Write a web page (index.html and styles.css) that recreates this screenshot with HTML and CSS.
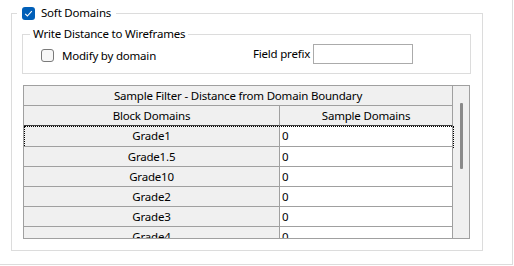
FILE: index.html
```html
<!DOCTYPE html>
<html>
<head>
<meta charset="utf-8">
<link rel="stylesheet" href="styles.css">
</head>
<body>
<div class="frame">
  <div class="group outer">
    <div class="legend legend-outer">
      <span class="cb cb-checked">
        <svg width="13" height="13" viewBox="0 0 13 13"><polyline points="3.2,6.8 5.4,9 9.8,4.2" fill="none" stroke="#fff" stroke-width="1.1"/></svg>
      </span>
      <span class="legend-text">Soft Domains</span>
    </div>
    <div class="group inner">
      <div class="legend legend-inner">Write Distance to Wireframes</div>
      <div class="inner-row">
        <div class="modify">
          <span class="cb cb-empty"></span>
          <span class="lbl">Modify by domain</span>
        </div>
        <span class="prefix-lbl">Field prefix</span>
        <span class="prefix-input"></span>
      </div>
    </div>
    <div class="grid">
      <div class="data">
        <div class="hdr span">Sample Filter - Distance from Domain Boundary</div>
        <div class="hdr c1 hdr2">Block Domains</div>
        <div class="hdr c2 hdr2">Sample Domains</div>
        <div class="row first">
          <div class="cell c1">Grade1</div>
          <div class="cell c2 val">0</div>
        </div>
        <div class="row">
          <div class="cell c1">Grade1.5</div>
          <div class="cell c2 val">0</div>
        </div>
        <div class="row">
          <div class="cell c1">Grade10</div>
          <div class="cell c2 val">0</div>
        </div>
        <div class="row">
          <div class="cell c1">Grade2</div>
          <div class="cell c2 val">0</div>
        </div>
        <div class="row">
          <div class="cell c1">Grade3</div>
          <div class="cell c2 val">0</div>
        </div>
        <div class="row">
          <div class="cell c1">Grade4</div>
          <div class="cell c2 val">0</div>
        </div>
      </div>
      <div class="scroll"><div class="thumb"></div></div>
    </div>
  </div>
</div>
</body>
</html>
```

FILE: styles.css
```css
* { box-sizing: border-box; }
html, body { margin: 0; padding: 0; background: #fff; }
body {
  font-family: "Noto Sans", "Segoe UI", sans-serif;
  font-size: 11.5px;
  letter-spacing: -0.2px;
  color: #000;
}
.frame {
  width: 513px;
  height: 265px;
  border-right: 1px solid #dcdcdc;
  border-bottom: 1px solid #dcdcdc;
  padding: 13px 0 0 11px;
}
.group {
  position: relative;
  border: 1px solid #dcdcdc;
}
.outer {
  width: 472px;
  height: 238px;
  padding: 20px 0 0 10px;
}
.inner {
  width: 449px;
  height: 40px;
  padding: 9px 0 0 18px;
}
.legend {
  position: absolute;
  background: #fff;
  display: flex;
  align-items: center;
  height: 16px;
  line-height: 16px;
  white-space: nowrap;
}
.legend-outer {
  left: 5px;
  top: -9px;
  padding: 0 5px;
  gap: 6px;
}
.legend-inner {
  left: 7px;
  top: -9px;
  padding: 0 3px;
}
.cb {
  display: inline-block;
  width: 13px;
  height: 13px;
  border-radius: 3px;
  flex: none;
}
.cb svg { display: block; }
.cb-checked { background: #005fb8; }
.cb-empty {
  border: 1px solid #7a7a7a;
  background: #f7f7f7;
}
.inner-row {
  display: flex;
  align-items: flex-start;
  height: 20px;
}
.modify {
  width: 212px;
  display: flex;
  align-items: center;
  gap: 8px;
  padding-top: 5px;
  line-height: 13px;
  white-space: nowrap;
}
.prefix-lbl {
  width: 60px;
  line-height: 20px;
  white-space: nowrap;
}
.prefix-input {
  width: 100px;
  height: 20px;
  border: 1px solid #ababab;
  background: #fff;
}
.grid {
  margin: 11px 0 0 1px;
  width: 447px;
  height: 154px;
  border: 1px solid #a0a0a0;
  display: flex;
  overflow: hidden;
}
.data {
  width: 429px;
  display: grid;
  grid-template-columns: 256px 173px;
  grid-auto-rows: min-content;
}
.hdr {
  background: #f0f0f0;
  height: 20px;
  line-height: 19px;
  text-align: center;
  border-bottom: 1px solid #a0a0a0;
  border-right: 1px solid #a0a0a0;
  white-space: nowrap;
}
.span { grid-column: 1 / 3; }
.hdr2 { border-bottom-color: #3c3c3c; }
.row {
  grid-column: 1 / 3;
  display: grid;
  grid-template-columns: 256px 173px;
  height: 20px;
  position: relative;
}
.row.first { height: 21px; }
.row.first::after {
  content: "";
  position: absolute;
  left: 0;
  top: 0;
  width: 428px;
  height: 20px;
  border: 1px dotted #000;
}
.cell {
  line-height: 19px;
  border-bottom: 1px solid #a0a0a0;
  border-right: 1px solid #a0a0a0;
  white-space: nowrap;
}
.cell.c1 { background: #f0f0f0; text-align: center; }
.cell.c2 { background: #fff; padding-left: 2px; }
.scroll {
  width: 16px;
  background: #f0f0f0;
  padding: 17px 0 0 7px;
}
.thumb {
  width: 3px;
  height: 66px;
  background: #8a8a8a;
  border-radius: 1px;
}
```
